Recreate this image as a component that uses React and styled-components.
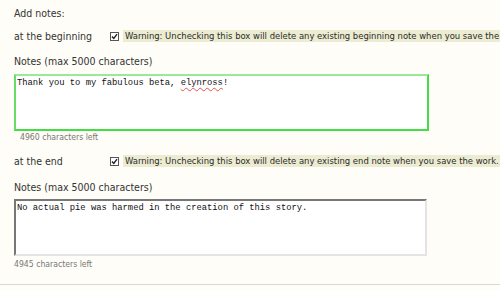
import React from "react";
import styled, { createGlobalStyle } from "styled-components";

const GlobalStyle = createGlobalStyle`
  html, body {
    margin: 0;
    padding: 0;
    background: #fffdf7;
    overflow: hidden;
  }
`;

const Page = styled.div`
  width: 500px;
  height: 285px;
  box-sizing: border-box;
  padding: 6px 0 0 14px;
  font-family: "DejaVu Sans Condensed", "DejaVu Sans", Tahoma, sans-serif;
  font-size: 10.5px;
  line-height: 14px;
  color: #333;
  border-bottom: 1px solid #d8d8d8;
  overflow: hidden;
`;

const Title = styled.div`
  margin-bottom: 9px;
`;

const Position = styled.div`
  display: flex;
  align-items: center;
  height: 14px;
  margin-top: ${(p) => p.top || 0}px;
  white-space: nowrap;
`;

const PositionLabel = styled.span`
  width: 96px;
  flex-shrink: 0;
`;

const Check = styled.span`
  width: 9px;
  height: 9px;
  flex-shrink: 0;
  box-sizing: border-box;
  border: 1px solid #555;
  background: #fff;
  display: flex;
  align-items: center;
  justify-content: center;
  margin-right: 4px;
  svg {
    display: block;
  }
`;

const Warning = styled.span`
  background: #ececd2;
  color: #2b2b2b;
  font-size: 9.4px;
  line-height: 12px;
  padding: 0 2px;
`;

const NotesLabel = styled.div`
  margin-top: ${(p) => p.top}px;
`;

const NoteBox = styled.div`
  margin-top: ${(p) => p.top}px;
  width: ${(p) => (p.focused ? 415 : 413)}px;
  height: 57px;
  box-sizing: border-box;
  background: #fff;
  padding: 2px 1px;
  font-family: "Liberation Mono", "Courier New", monospace;
  font-size: 8.8px;
  line-height: 11px;
  color: #111;
  border: 2px solid;
  border-color: ${(p) =>
    p.focused ? "#9be89b #44dd44 #44dd44 #66dd66" : "#777 #e4e4e4 #e4e4e4 #777"};
`;

const SpellError = styled.span`
  text-decoration: underline wavy #e05555;
  text-decoration-thickness: 1px;
  text-underline-offset: 2px;
`;

const CharsLeft = styled.div`
  margin-top: ${(p) => p.top}px;
  padding-left: ${(p) => p.indent || 0}px;
  font-size: 8.6px;
  line-height: 11px;
  color: #777;
`;

const CheckMark = () => (
  <svg width="7" height="7" viewBox="0 0 7 7">
    <path d="M1 3.5 L2.8 5.5 L6 1.2" fill="none" stroke="#222" strokeWidth="1.4" />
  </svg>
);

const NotePosition = ({ label, where, top }) => (
  <Position top={top}>
    <PositionLabel>{label}</PositionLabel>
    <Check>
      <CheckMark />
    </Check>
    <Warning>
      Warning: Unchecking this box will delete any existing {where} note when you save the work.
    </Warning>
  </Position>
);

const App = () => {
  return (
    <>
      <GlobalStyle />
      <Page>
        <Title>Add notes:</Title>
        <NotePosition label="at the beginning" where="beginning" />
        <NotesLabel top={11}>Notes (max 5000 characters)</NotesLabel>
        <NoteBox top={6} focused>
          Thank you to my fabulous beta, <SpellError>elynross</SpellError>!
        </NoteBox>
        <CharsLeft top={1} indent={6}>4960 characters left</CharsLeft>
        <NotePosition label="at the end" where="end" top={11} />
        <NotesLabel top={12}>Notes (max 5000 characters)</NotesLabel>
        <NoteBox top={5}>No actual pie was harmed in the creation of this story.</NoteBox>
        <CharsLeft top={3}>4945 characters left</CharsLeft>
      </Page>
    </>
  );
};

export default App;
